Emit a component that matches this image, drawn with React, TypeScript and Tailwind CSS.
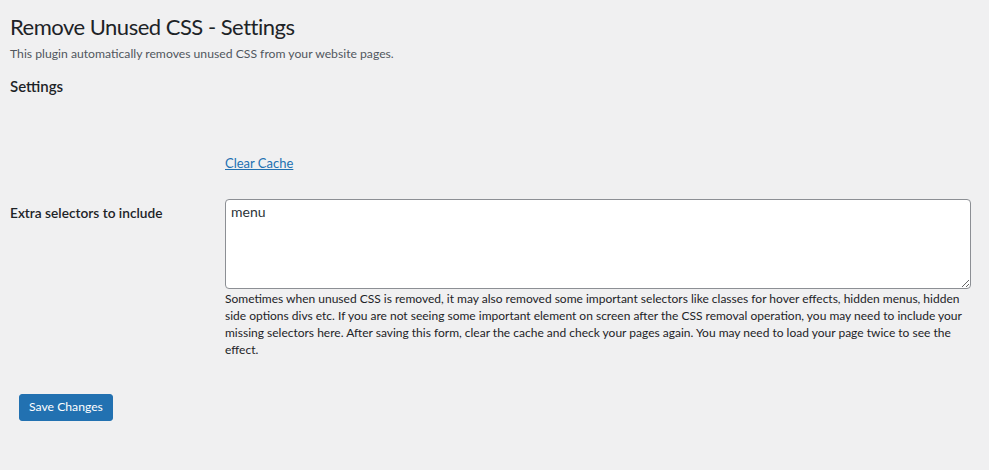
export default function App() {
  return (
    <div className="min-h-[470px] w-full bg-[#f0f0f1] text-[#1d2327]" style={{ fontFamily: 'Lato, "Noto Sans", sans-serif' }}>
      <div className="pl-[10px] pr-[18px] pt-[12px]">
        <h1 className="text-[22px] leading-[29px] font-normal tracking-[-0.5px] text-[#1d2327]">Remove Unused CSS - Settings</h1>
        <p className="mt-[4px] text-[12.2px] leading-[18px] text-[#50575e]">This plugin automatically removes unused CSS from your website pages.</p>
        <h2 className="mt-[13px] text-[15px] leading-[20px] font-semibold">Settings</h2>
        <div className="flex mt-[58px]">
          <div className="w-[215px] shrink-0" />
          <a href="#" className="text-[13px] leading-[18px] text-[#2271b1] underline">Clear Cache</a>
        </div>
        <div className="flex mt-[27px]">
          <div className="w-[215px] shrink-0 pt-[4px] text-[13.7px] leading-[20px] font-semibold">Extra selectors to include</div>
          <div className="flex-1">
            <textarea
              className="block w-full h-[90px] bg-white border border-[#8c8f94] rounded-[4px] px-[5px] py-[2px] text-[14px] leading-[20px] text-[#2c3338] resize-y"
              defaultValue="menu"
            />
            <p className="mt-[1px] text-[12px] leading-[17px] text-[#1d2327]">
              Sometimes when unused CSS is removed, it may also removed some important selectors like classes for hover effects, hidden menus, hidden side options divs etc. If you are not seeing some important element on screen after the CSS removal operation, you may need to include your missing selectors here. After saving this form, clear the cache and check your pages again. You may need to load your page twice to see the effect.
            </p>
          </div>
        </div>
        <div className="mt-[35px] pl-[9px]">
          <button className="h-[27px] px-[9px] bg-[#2271b1] text-white text-[12.2px] rounded-[3px] border border-[#2271b1]">Save Changes</button>
        </div>
      </div>
    </div>
  );
}
